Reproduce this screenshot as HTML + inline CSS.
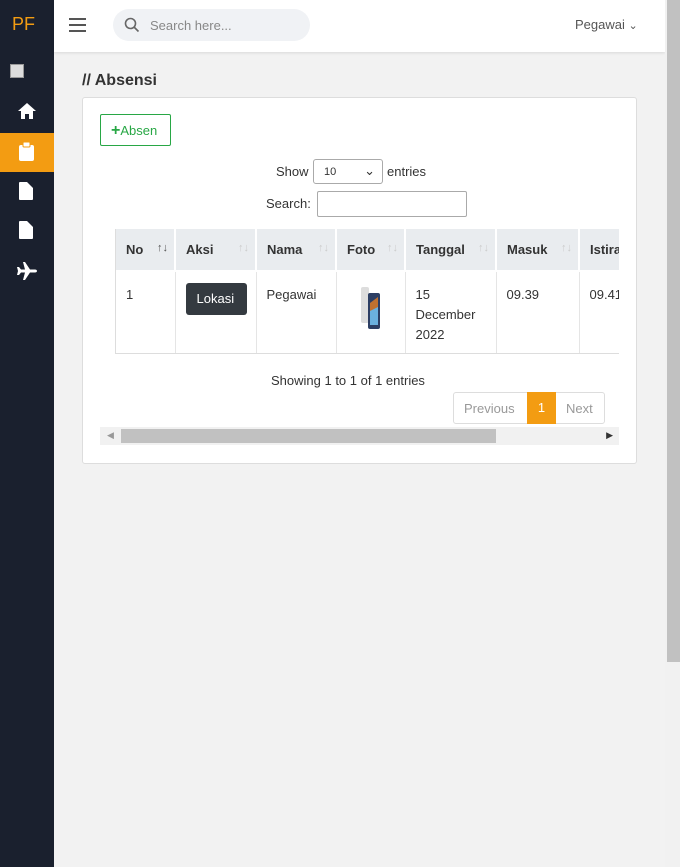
<!DOCTYPE html>
<html><head><meta charset="utf-8"><style>
*{box-sizing:border-box;margin:0;padding:0}
body{width:680px;height:867px;overflow:hidden;background:#f2f2f2;font-family:"Liberation Sans",sans-serif;font-size:13px;color:#333;position:relative}
.side{position:absolute;left:0;top:0;width:54px;height:867px;background:#1a202e}
.side .pf{position:absolute;left:12px;top:14px;color:#f39c12;font-size:18px}
.side .act{position:absolute;left:0;top:133px;width:54px;height:39px;background:#f39c12}
.ico{position:absolute;left:17px}
.top{position:absolute;left:54px;top:0;width:611px;height:52px;background:#fff;box-shadow:0 1px 3px rgba(0,0,0,.1)}
.srch{position:absolute;left:59px;top:9px;width:197px;height:32px;border-radius:16px;background:#f0f2f5;color:#888;font-size:13px;padding:9px 0 0 37px}
.vs{position:absolute;left:665px;top:0;width:15px;height:867px;background:#f1f1f1}
.vs div{position:absolute;left:2px;top:0;width:13px;height:662px;background:#c1c1c1}
h1{position:absolute;left:82px;top:72px;font-size:16px;font-weight:bold;color:#333}
.card{position:absolute;left:82px;top:97px;width:555px;height:367px;background:#fff;border:1px solid #ddd;border-radius:3px}
.btn{position:absolute;left:100px;top:114px;width:71px;height:32px;border:1px solid #28a745;color:#28a745;border-radius:2px;font-size:13px;padding:7px 0 0 10px}
.tbl{position:absolute;left:115px;top:229px;width:504px;height:125px;overflow:hidden;border-left:1px solid #ddd;border-bottom:1px solid #ddd}
table{border-collapse:collapse;font-size:13px;table-layout:fixed;width:543px}
th{background:#e9ecef;height:42px;text-align:left;padding-left:10px;border-right:2px solid #fff;border-bottom:2px solid #fff;color:#333;white-space:nowrap;overflow:hidden}
td{height:82px;vertical-align:top;padding:13px 0 0 10px;border-right:1px solid #e5e5e5;line-height:20px}
.s{color:#ccc;font-weight:normal;font-size:11px;float:right;margin-right:6px}
.hs{position:absolute;left:100px;top:427px;width:519px;height:18px;background:#f1f1f1}
.hs div{position:absolute;left:21px;top:2px;width:375px;height:14px;background:#c1c1c1}
</style></head><body>
<div class="side"><div class="pf">PF</div>
<div style="position:absolute;left:10px;top:64px;width:14px;height:14px;border:1px solid #999;background:#ddd"></div>
<svg class="ico" style="top:102px" width="20" height="18" viewBox="0 0 20 18"><path d="M10 1L1 9h3v8h4v-5h4v5h4V9h3z" fill="#fff"/></svg>
<div class="act"></div>
<svg class="ico" style="top:142px;left:19px" width="15" height="19" viewBox="0 0 15 19"><rect x="0" y="3" width="15" height="16" rx="2" fill="#fff"/><rect x="4" y="0" width="7" height="5" rx="1" fill="#fff" stroke="#f39c12"/></svg>
<svg class="ico" style="top:182px;left:19px" width="14" height="18" viewBox="0 0 14 18"><path d="M0 1q0-1 1-1h7l6 6v11q0 1-1 1H1q-1 0-1-1z" fill="#fff"/></svg>
<svg class="ico" style="top:221px;left:19px" width="14" height="18" viewBox="0 0 14 18"><path d="M0 1q0-1 1-1h7l6 6v11q0 1-1 1H1q-1 0-1-1z" fill="#fff"/></svg>
<svg class="ico" style="top:262px" width="20" height="18" viewBox="0 0 20 18"><path d="M20 9c0-1-1-1.5-2-1.5h-5L8 0H6l2 7.5H4L2 5H0l1 4-1 4h2l2-2.5h4L6 18h2l5-7.5h5c1 0 2-.5 2-1.5z" fill="#fff"/></svg>
</div>
<div class="top">
<svg style="position:absolute;left:15px;top:17px" width="17" height="15"><path d="M0 2h17M0 8h17M0 14h17" stroke="#555" stroke-width="2"/></svg>
<div class="srch">Search here...</div>
<svg style="position:absolute;left:70px;top:17px" width="16" height="16"><circle cx="6.5" cy="6.5" r="5" stroke="#666" stroke-width="1.6" fill="none"/><path d="M10 10l4.5 4.5" stroke="#666" stroke-width="1.6"/></svg>
<div style="position:absolute;left:521px;top:17px;color:#555">Pegawai <span style="font-size:11px">&#8964;</span></div>
</div>
<div class="vs"><div></div></div>
<h1>// Absensi</h1>
<div class="card"></div>
<div class="btn"><b style="font-size:16px">+</b>Absen</div>
<div style="position:absolute;left:276px;top:164px">Show</div>
<div style="position:absolute;left:313px;top:159px;width:70px;height:25px;border:1px solid #aaa;border-radius:3px;font-size:11px;padding:6px 0 0 10px">10<span style="position:absolute;right:7px;top:3px;font-size:13px">&#8964;</span></div>
<div style="position:absolute;left:387px;top:164px">entries</div>
<div style="position:absolute;left:266px;top:196px">Search:</div>
<div style="position:absolute;left:317px;top:191px;width:150px;height:26px;border:1px solid #aaa;border-radius:2px"></div>
<div class="tbl"><table>
<colgroup><col style="width:59px"><col style="width:81px"><col style="width:80px"><col style="width:69px"><col style="width:91px"><col style="width:83px"><col style="width:80px"></colgroup>
<tr><th>No <span class="s" style="color:#555">↑↓</span></th><th>Aksi <span class="s">↑↓</span></th><th>Nama <span class="s">↑↓</span></th><th>Foto <span class="s">↑↓</span></th><th>Tanggal <span class="s">↑↓</span></th><th>Masuk <span class="s">↑↓</span></th><th>Istirahat</th></tr>
<tr><td>1</td><td style="padding-top:11px"><span style="display:inline-block;background:#343a40;color:#fff;border-radius:3px;width:61px;height:32px;padding:7px 0 0 11px;line-height:18px">Lokasi</span></td><td>Pegawai</td><td><svg style="margin:0 0 0 12px" width="22" height="44"><rect x="2" y="2" width="8" height="36" rx="2" fill="#ddd"/><rect x="9" y="8" width="12" height="36" rx="2" fill="#2c3e63"/><path d="M11 18l8-6v22l-8 6z" fill="#e67e22" opacity=".8"/><path d="M11 26l8-4v18h-8z" fill="#6ab0de"/></svg></td><td>15<br>December<br>2022</td><td>09.39</td><td>09.41</td></tr>
</table></div>
<div style="position:absolute;left:271px;top:373px">Showing 1 to 1 of 1 entries</div>
<div style="position:absolute;left:453px;top:392px;width:152px;height:32px;border:1px solid #ddd;border-radius:3px;color:#999">
<span style="position:absolute;left:10px;top:8px">Previous</span>
<span style="position:absolute;left:73px;top:-1px;width:29px;height:32px;background:#f39c12;color:#fff;text-align:center;padding-top:8px">1</span>
<span style="position:absolute;left:112px;top:8px">Next</span></div>
<div class="hs"><div></div><span style="position:absolute;left:7px;top:3px;font-size:9px;color:#999">◀</span><span style="position:absolute;right:6px;top:3px;font-size:9px;color:#333">▶</span></div>
</body></html>
